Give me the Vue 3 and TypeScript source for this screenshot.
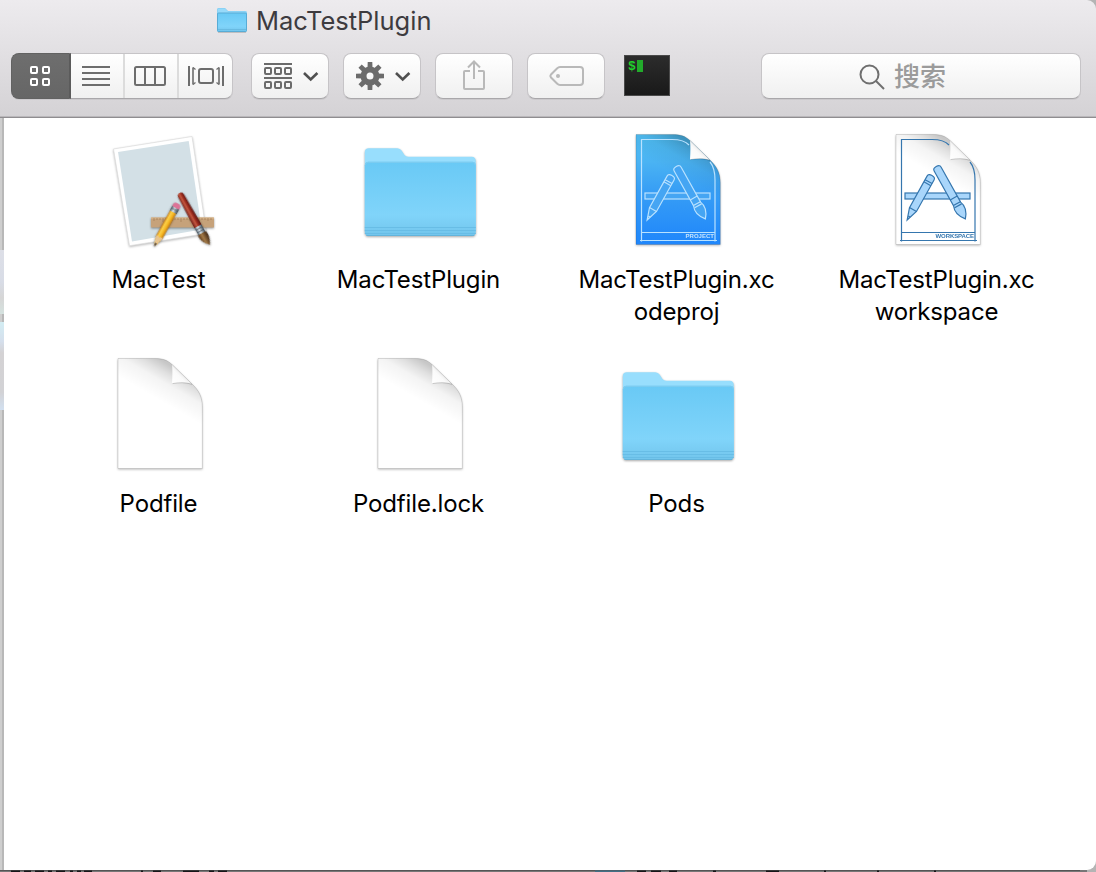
<script setup lang="ts">
type Kind = 'app' | 'folder' | 'project' | 'workspace' | 'doc'
interface FinderItem {
  lines: string[]
  kind: Kind
}

const items: FinderItem[] = [
  { lines: ['MacTest'], kind: 'app' },
  { lines: ['MacTestPlugin'], kind: 'folder' },
  { lines: ['MacTestPlugin.xc', 'odeproj'], kind: 'project' },
  { lines: ['MacTestPlugin.xc', 'workspace'], kind: 'workspace' },
  { lines: ['Podfile'], kind: 'doc' },
  { lines: ['Podfile.lock'], kind: 'doc' },
  { lines: ['Pods'], kind: 'folder' },
]

const isPage = (k: Kind) => k === 'doc' || k === 'project' || k === 'workspace'
const pageFill = (k: Kind) => (k === 'project' ? 'url(#blueprint)' : '#fff')
const gearTeeth = [0, 45, 90, 135, 180, 225, 270, 315]
const pagePath = 'M22 8.500H58C67 8.500 71 10 76 14.500L96 34C103 40.500 106.300 47 106.300 57V118.500H22Z'

// Dark slivers of the window that lies below: [x, width]
const slivers: number[][] = [
  [11, 9], [24, 7], [35, 9], [48, 4], [56, 9], [70, 3], [77, 4], [84, 8],
  [141, 2], [153, 8], [183, 16], [209, 5], [218, 9],
  [637, 9], [651, 10], [669, 8], [713, 3], [766, 13], [824, 2], [877, 2], [934, 2],
]
</script>

<template>
  <div class="screen">
    <svg class="defs" width="0" height="0">
      <defs>
        <linearGradient id="folderFront" x1="0" y1="0" x2="0" y2="1">
          <stop offset="0" stop-color="#69c9f5" />
          <stop offset=".72" stop-color="#80d4fa" />
          <stop offset="1" stop-color="#72c5ec" />
        </linearGradient>
        <linearGradient id="blueprint" x1="0" y1="0" x2="0" y2="1">
          <stop offset="0" stop-color="#4fbdf2" />
          <stop offset=".25" stop-color="#4ab3f3" />
          <stop offset=".5" stop-color="#389ff5" />
          <stop offset="1" stop-color="#1f86fb" />
        </linearGradient>
        <linearGradient id="curlShade" gradientUnits="userSpaceOnUse" x1="84" y1="21" x2="66" y2="52">
          <stop offset="0" stop-color="#000" stop-opacity=".22" />
          <stop offset=".25" stop-color="#000" stop-opacity=".12" />
          <stop offset=".5" stop-color="#000" stop-opacity=".045" />
          <stop offset="1" stop-color="#000" stop-opacity="0" />
        </linearGradient>
        <linearGradient id="curl" gradientUnits="userSpaceOnUse" x1="76" y1="34" x2="87" y2="23">
          <stop offset="0" stop-color="#fff" />
          <stop offset=".7" stop-color="#fafafa" />
          <stop offset="1" stop-color="#e8e8e8" />
        </linearGradient>
        <linearGradient id="pencilBody" x1="0" x2="1" y1="0" y2="0">
          <stop offset="0" stop-color="#d88a12" />
          <stop offset=".3" stop-color="#fbd04a" />
          <stop offset=".65" stop-color="#f5b622" />
          <stop offset="1" stop-color="#c27a10" />
        </linearGradient>
        <linearGradient id="brushBody" x1="0" x2="1" y1="0" y2="0">
          <stop offset="0" stop-color="#6d1712" />
          <stop offset=".4" stop-color="#c65a42" />
          <stop offset=".6" stop-color="#a02f20" />
          <stop offset="1" stop-color="#57100d" />
        </linearGradient>
        <linearGradient id="metal" x1="0" x2="1" y1="0" y2="0">
          <stop offset="0" stop-color="#4b5a66" />
          <stop offset=".4" stop-color="#dbe5ec" />
          <stop offset="1" stop-color="#3f4c57" />
        </linearGradient>
        <linearGradient id="bristle" x1="0" x2="1" y1="0" y2="0">
          <stop offset="0" stop-color="#5c3a1c" />
          <stop offset=".4" stop-color="#a47b48" />
          <stop offset="1" stop-color="#3e2512" />
        </linearGradient>
      </defs>
    </svg>

    <header class="chrome">
      <div class="title">
        <svg width="32" height="28" viewBox="0 0 32 28">
          <path class="mini-shadow" d="M2 25.500H30" />
          <path d="M1 3.500Q1 2 2.500 2H9L12 5H29Q31 5 31 7V24Q31 26 29 26H3Q1 26 1 24Z" fill="#7ccbf1" />
          <path d="M1.500 7V3.500Q1.500 2.500 2.500 2.500H9L12 5.500H30.500V7Z" fill="#97dafa" />
          <rect x="1.500" y="7" width="29" height="18.500" rx="1" fill="url(#folderFront)" stroke="#58acd6" stroke-width="1" />
          <path d="M2 23.500H30" stroke="#69bbe2" />
        </svg>
        <span>MacTestPlugin</span>
      </div>

      <div class="toolbar">
        <div class="segmented">
          <div class="seg active">
            <svg width="22" height="22" viewBox="0 0 22 22" fill="none" stroke="#fff" stroke-width="2">
              <rect x="2" y="2" width="6" height="6" rx="1" />
              <rect x="14" y="2" width="6" height="6" rx="1" />
              <rect x="2" y="14" width="6" height="6" rx="1" />
              <rect x="14" y="14" width="6" height="6" rx="1" />
            </svg>
          </div>
          <div class="seg list">
            <svg width="28" height="20" viewBox="0 0 28 20" stroke="#6d6d6d" stroke-width="2">
              <path d="M0 1H28M0 7H28M0 13H28M0 19H28" />
            </svg>
          </div>
          <div class="seg columns">
            <svg width="32" height="20" viewBox="0 0 32 20" fill="none" stroke="#6d6d6d" stroke-width="2">
              <rect x="1" y="1" width="30" height="18" rx="1.500" />
              <path d="M11 1V19M21 1V19" />
            </svg>
          </div>
          <div class="seg flow">
            <svg width="36" height="20" viewBox="0 0 36 20" fill="none" stroke="#6d6d6d" stroke-width="2">
              <path d="M1 0V20M35 0V20" />
              <rect x="11" y="3" width="14" height="14" rx="2" />
              <path d="M5 1.500V18.500M31 1.500V18.500" stroke-width="1.600" />
              <path d="M5 1.500L7.500 3.500M5 18.500L7.500 16.500M31 1.500L28.500 3.500M31 18.500L28.500 16.500" stroke-width="1.300" />
            </svg>
          </div>
        </div>

        <div class="btn arrange">
          <svg width="56" height="28" viewBox="0 0 56 28" fill="none" stroke="#6b6b6b" stroke-width="2">
            <path d="M0 2H28M0 16H28" />
            <g>
              <rect v-for="x in [1, 11, 21]" :key="'a' + x" :x="x" y="6" width="6" height="6" rx="1" />
              <rect v-for="x in [1, 11, 21]" :key="'b' + x" :x="x" y="20" width="6" height="6" rx="1" />
            </g>
            <path d="M40 11L46.700 17.500L53.400 11" stroke="#505050" stroke-width="2.600" />
          </svg>
        </div>

        <div class="btn gear">
          <svg width="56" height="28" viewBox="0 0 56 28">
            <g transform="translate(14 14)" fill="#6b6b6b">
              <path d="M-2.500 -8L-2.300 -14H2.300L2.500 -8Z" v-for="a in gearTeeth" :key="a" :transform="`rotate(${a})`" />
              <circle r="6.500" fill="none" stroke="#6b6b6b" stroke-width="6" />
            </g>
            <path d="M40 11L46.700 17.500L53.400 11" fill="none" stroke="#505050" stroke-width="2.600" />
          </svg>
        </div>

        <div class="btn share">
          <svg width="24" height="32" viewBox="0 0 24 32" fill="none" stroke="#b9b9b9" stroke-width="2">
            <path d="M8 12H3Q2 12 2 13V29Q2 30 3 30H21Q22 30 22 29V13Q22 12 21 12H16M12 20V3M6 8.500L12 2.500L18 8.500" />
          </svg>
        </div>

        <div class="btn tag">
          <svg width="36" height="22" viewBox="0 0 36 22" fill="none" stroke="#b9b9b9" stroke-width="2">
            <path d="M11 2H31Q34 2 34 5V17Q34 20 31 20H11Q9.500 20 8 18.500L2 12.500Q0.800 11 2 9.500L8 3.500Q9.500 2 11 2Z" />
            <circle cx="9" cy="11" r="2" fill="#b9b9b9" stroke="none" />
          </svg>
        </div>

        <div class="terminal"><span>$</span><i></i></div>

        <div class="search">
          <svg width="26" height="26" viewBox="0 0 26 26" fill="none" stroke="#6f6f6f" stroke-width="2">
            <circle cx="10.500" cy="10.500" r="9" />
            <path d="M17 17L25 25" />
          </svg>
          <span>搜索</span>
        </div>
      </div>
    </header>

    <div class="body">
      <div class="edge">
        <i class="glow one"></i>
        <i class="glow two"></i>
      </div>
      <main class="files">
        <div v-for="(item, i) in items" :key="i" class="file">
          <svg class="icon" width="128" height="128" viewBox="0 0 128 128">
            <g v-if="item.kind === 'folder'" class="folder-shadow" transform="translate(.3 .3)">
              <path d="M8.500 105V26Q8.500 22 12.500 22H41Q44 22 45.500 24.500L48 28.500Q49.500 30.500 52 30.500H115.500Q119.500 30.500 119.500 35V105Z" fill="#98defd" />
              <path d="M8.500 39Q8.500 35.500 12 35.500H116Q119.500 35.500 119.500 39V105.500Q119.500 109.500 115.500 109.500H12.500Q8.500 109.500 8.500 105.500Z" fill="url(#folderFront)" />
              <path d="M9 39Q9 36 12 36H116Q119 36 119 39" fill="none" stroke="#80cdf0" />
              <path d="M8.500 101.200H119.500M8.500 104.200H119.500M8.500 107.200H119.500" stroke="#68bde6" stroke-width="1" />
              <path d="M10 109.200H118" stroke="#5cb1db" stroke-width=".8" />
            </g>

            <g v-if="isPage(item.kind)" class="page-shadow">
              <path :d="pagePath" :fill="pageFill(item.kind)" />
              <path :d="pagePath" fill="url(#curlShade)" />
              <g
                v-if="item.kind !== 'doc'"
                :class="item.kind"
                fill="none"
                stroke-width="1.200"
              >
                <path class="frame" d="M27.500 115.500V13.500H58Q70 13.500 75 19M96 36Q101 42 101 54V115.500M26 114.500H103M27.500 106.500H101" />
                <rect class="part" x="31" y="67" width="65" height="6" />
                <g transform="translate(58 49.500) rotate(29.200)">
                  <path class="part" d="M-4 3Q-4 0 0 0Q4 0 4 3V39L0 51L-4 39Z" />
                  <path d="M-4 7H4M-4 9.500H4M-4 39H4M-1 47H1" />
                </g>
                <g transform="translate(62.200 40.500) rotate(-29.100)">
                  <path class="part" d="M-4 3Q-4 0 0 0Q4 0 4 3V43Q7.500 51 0 60Q-7.500 51 -4 43Z" />
                  <path d="M-4 36H4M-4 42.500H4M-4 45H4" />
                </g>
                <text x="100" y="112.200" text-anchor="end" :textLength="item.kind === 'project' ? 28.5 : 38.5">{{ item.kind.toUpperCase() }}</text>
              </g>
              <path d="M76 14.500L96 34C89 32 83 32.500 76 33.500Q76.800 22 76 14.500Z" fill="url(#curl)" />
              <path d="M76.500 33.600C83 32.400 89 32.200 96 34.300" fill="none" stroke="#000" stroke-opacity=".18" />
              <path :d="pagePath" fill="none" stroke="#000" stroke-opacity=".16" stroke-width=".8" />
            </g>

            <g v-if="item.kind === 'app'">
              <g class="page-shadow">
                <path d="M17.500 23L96 10.500L110.500 107.500L33.500 119.700Z" fill="#fff" stroke="#dcdcdc" stroke-width=".7" />
                <path d="M22 26L92.700 15L105.700 103.500L36 115.500Z" fill="#d3e0e6" />
              </g>
              <g class="tool-shadow">
                <rect x="55" y="91.500" width="63" height="10" rx=".5" fill="#c6a27a" />
                <path d="M55 92H118" stroke="#dfbd91" />
                <path d="M58 92V95M61 92V94M64 92V94M67 92V96M70 92V94M73 92V94M76 92V95M79 92V94M82 92V94M85 92V96M88 92V94M91 92V94M94 92V95M97 92V94M100 92V94M103 92V96M106 92V94M109 92V94M112 92V95M115 92V94" stroke="#9c774f" stroke-width=".6" />
              </g>
              <g class="tool-shadow" transform="translate(82 77.500) rotate(29)">
                <path d="M-3.500 9H3.500V39L.700 48H-.700L-3.500 39Z" fill="url(#pencilBody)" />
                <path d="M-3.500 38.500Q-1.800 37 0 39Q1.800 37 3.500 38.500L.700 48H-.700Z" fill="#e8c590" />
                <path d="M-1 45.500H1L0 49.500Z" fill="#332a25" />
                <rect x="-3.800" y="4" width="7.600" height="6" fill="url(#metal)" />
                <path d="M-3.800 7H3.800" stroke="#4b5660" stroke-width=".7" />
                <path d="M-3.800 5V2Q-3.800 0 0 0Q3.800 0 3.800 2V5Z" fill="#dc7397" />
              </g>
              <g class="tool-shadow" transform="translate(83.500 67) rotate(-29)">
                <path d="M-3.200 3Q-3 0 0 0Q3 0 3.200 3L4 39H-4Z" fill="url(#brushBody)" />
                <path d="M-4 45H4Q6.700 51 1.500 60Q-6.500 52 -4 45Z" fill="url(#bristle)" />
                <rect x="-4" y="38" width="8" height="8" fill="url(#metal)" />
                <path d="M-4 40.500H4M-4 43.500H4" stroke="#4b5660" stroke-width=".6" />
              </g>
            </g>
          </svg>
          <div class="label">
            <span v-for="line in item.lines" :key="line">{{ line }}</span>
          </div>
        </div>
      </main>
    </div>
    <svg class="below" width="1096" height="2" viewBox="0 0 1096 2">
      <rect width="1096" height="2" fill="#777" />
      <rect width="1080" height="1" fill="#555" />
      <rect x="595" width="30" height="2" y="0.500" fill="#426f85" />
      <rect v-for="s in slivers" :key="s[0]" :x="s[0]" y="0.500" :width="s[1]" height="1.500" fill="#171719" />
      <rect x="1087" width="9" height="2" fill="#b4b4b4" />
    </svg>
  </div>
</template>

<style>
html,
body {
  margin: 0;
  overflow: hidden;
}
</style>

<style scoped>
.screen {
  width: 1096px;
  height: 872px;
  display: flex;
  flex-direction: column;
  overflow: hidden;
  background: #b4b4b4;
  font-family: Inter, "Liberation Sans", "Noto Sans CJK SC", sans-serif;
}
.defs {
  position: absolute;
}
.chrome {
  box-sizing: border-box;
  height: 118px;
  flex: none;
  border-bottom: 1px solid #8f8d90;
  border-top-right-radius: 9px;
  background: linear-gradient(#edebee, #d4d2d5);
  box-shadow: inset 0 -1px #b9b7ba;
}
.title {
  height: 42px;
  padding-left: 216px;
  display: flex;
  align-items: center;
  gap: 8px;
  font-size: 25.500px;
  font-weight: 430;
  color: #3d3b3f;
}
.title svg {
  margin-top: -2px;
}
.title span {
  line-height: 42px;
}
.mini-shadow {
  stroke: #999;
  stroke-width: 2;
}
.toolbar {
  display: flex;
  padding: 11px 15px 0 11px;
}
.segmented,
.btn,
.search {
  box-sizing: border-box;
  height: 46px;
  border: 1px solid #c6c4c7;
  border-bottom-color: #a9a7aa;
  border-radius: 8px;
  background: linear-gradient(#fff, #f0f0f0);
  box-shadow: 0 1px 0 rgba(0, 0, 0, 0.06);
}
.segmented {
  width: 222px;
  display: flex;
  margin-right: 18px;
}
.seg {
  box-sizing: border-box;
  width: 54px;
  flex: none;
  display: flex;
  align-items: center;
  justify-content: center;
}
.seg.active {
  width: 60px;
  height: 46px;
  margin: -1px 0 0 -1px;
  padding-right: 1px;
  background: linear-gradient(#6e6e6e, #666);
  border: 1px solid #626262;
  border-right: 2px solid #5b5b5b;
  border-radius: 8px 0 0 8px;
}
.seg.list {
  padding-right: 2px;
  border-right: 2px solid #dcdcdc;
}
.seg.columns {
  padding-right: 2px;
  border-right: 2px solid #dcdcdc;
}
.seg.flow {
  width: 53px;
}
.btn {
  width: 78px;
  margin-right: 14px;
  display: flex;
  align-items: center;
  justify-content: center;
}
.arrange svg,
.gear svg {
  margin-left: 4px;
}
.share svg {
  margin-top: -2px;
}
.tag svg {
  margin-left: 1px;
}
.terminal {
  box-sizing: border-box;
  width: 46px;
  height: 41px;
  margin: 2px 0 0 5px;
  padding: 5px 0 0 3px;
  display: flex;
  gap: 1px;
  border: 1px solid #4a4a4a;
  background: linear-gradient(#2c2c2c, #191919);
  color: #21d02c;
  font: bold 13px/13px "Liberation Mono", monospace;
}
.terminal i {
  width: 6px;
  height: 12px;
  margin-top: -1px;
  background: #22ab2b;
}
.terminal span {
  margin-top: -1px;
}
.search {
  width: 320px;
  margin-left: auto;
  padding-right: 37px;
  display: flex;
  justify-content: center;
  align-items: center;
  gap: 9px;
  color: #9b9b9b;
  font: 500 26px/44px "Noto Sans CJK SC", sans-serif;
}
.search svg {
  margin-top: 2px;
}
.search span {
  margin-top: -3px;
}
.body {
  height: 752px;
  flex: none;
  display: flex;
}
.edge {
  box-sizing: border-box;
  width: 4px;
  border-right: 2px solid #b8b8b8;
  background: #cecece;
}
.glow {
  display: block;
  width: 4px;
}
.glow.one {
  height: 64px;
  margin-top: 132px;
  background: linear-gradient(#dddfe7, #d8dce6 50%, #d6d6d6 75%, #d5e2df);
}
.glow.two {
  height: 88px;
  margin-top: 8px;
  background: linear-gradient(#d3edf3, #d5dfec 22%, #d4d2d4 35%, #d2d2d5 80%, #d2e0f0);
}
.files {
  box-sizing: border-box;
  width: 1092px;
  padding: 8px 0 0 26px;
  display: grid;
  grid-template-columns: 260px 260px 256px 264px;
  grid-auto-rows: 224px;
  background: #fff;
  align-content: start;
  border-bottom-right-radius: 9px;
}
.file {
  display: flex;
  flex-direction: column;
  align-items: center;
}
.icon {
  flex: none;
}
.label {
  margin-top: 10px;
  padding-right: 3px;
  display: flex;
  flex-direction: column;
  align-items: center;
  font-size: 24px;
  font-weight: 440;
  letter-spacing: -0.140px;
  line-height: 32px;
  color: #000;
}
.folder-shadow {
  filter: drop-shadow(0 1px 1px rgba(0, 0, 0, 0.35));
}
.page-shadow {
  filter: drop-shadow(0 1px 1px rgba(0, 0, 0, 0.28));
}
.tool-shadow {
  filter: drop-shadow(0 1px 1px rgba(0, 0, 0, 0.4));
}
.project {
  stroke: #b9e2ff;
}
.project .part {
  fill: #45a5f3;
}
.workspace {
  stroke: #3576ae;
}
.workspace .part {
  fill: #a9d6fb;
}
.project text,
.workspace text {
  stroke: none;
  font: bold 6px "Liberation Sans", sans-serif;
}
.project text {
  fill: #c4e4ff;
}
.workspace text {
  fill: #3576ae;
}
.below {
  display: block;
  flex: none;
}
</style>
